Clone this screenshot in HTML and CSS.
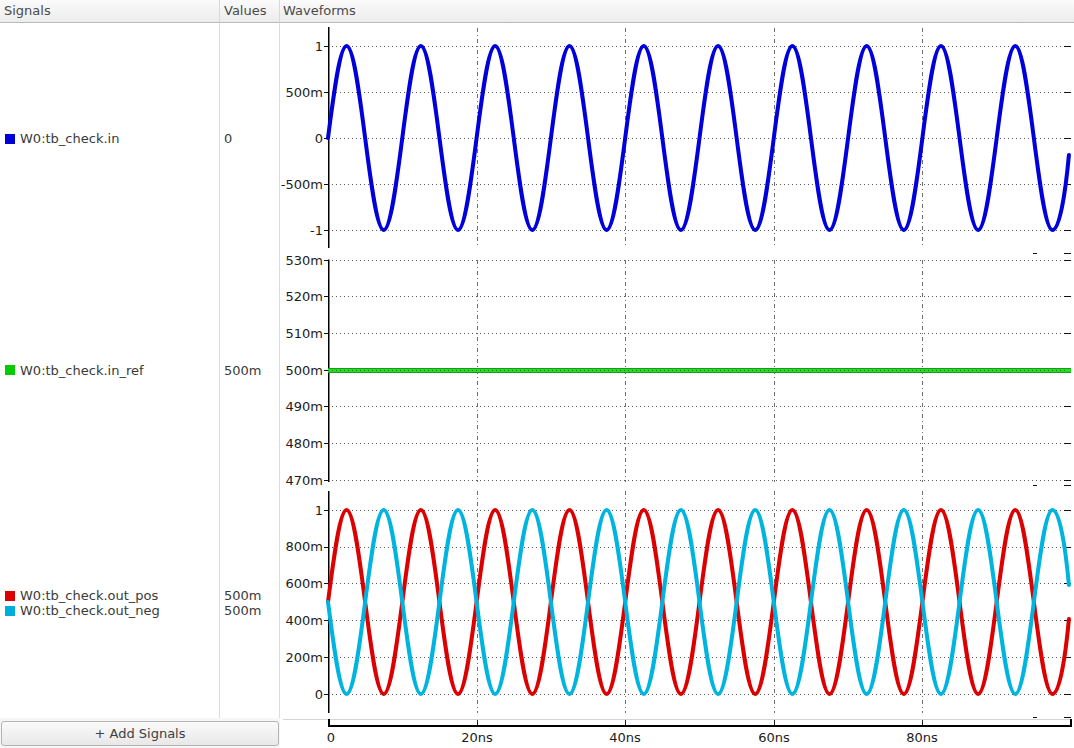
FILE: index.html
```html
<!DOCTYPE html>
<html>
<head>
<meta charset="utf-8">
<title>Waveforms</title>
<link rel="stylesheet" href="styles.css">
</head>
<body>
<div class="app">
  <div class="hcell h-signals">Signals</div>
  <div class="hcell h-values">Values</div>
  <div class="hcell h-waves">Waveforms</div>

  <div class="col signals">
    <div class="row r1"><div class="sig"><span class="sw blue"></span>W0:tb_check.in</div></div>
    <div class="row r2"><div class="sig"><span class="sw green"></span>W0:tb_check.in_ref</div></div>
    <div class="row r3">
      <div class="sig"><span class="sw red"></span>W0:tb_check.out_pos</div>
      <div class="sig"><span class="sw cyan"></span>W0:tb_check.out_neg</div>
    </div>
  </div>

  <div class="col values">
    <div class="row r1"><div class="val">0</div></div>
    <div class="row r2"><div class="val">500m</div></div>
    <div class="row r3">
      <div class="val">500m</div>
      <div class="val">500m</div>
    </div>
  </div>

  <div class="waves">
    <svg class="plot" width="794" height="725" viewBox="280 23 794 725" xmlns="http://www.w3.org/2000/svg">
      <!-- grid: horizontal dotted -->
      <path class="grid" d="M328,46.5H1066M328,92.5H1066M328,138.5H1066M328,184.5H1066M328,230.5H1066
        M328,260.5H1066M328,296.5H1066M328,333.5H1066M328,370.5H1066M328,406.5H1066M328,443.5H1066M328,480.5H1066
        M328,510.5H1066M328,547.5H1066M328,583.5H1066M328,620.5H1066M328,657.5H1066M328,694.5H1066"/>
      <!-- grid: vertical dash-dot -->
      <path class="vgrid" d="M477.5,28V248M625.5,28V248M774.5,28V248M922.5,28V248
        M477.5,260V482M625.5,260V482M774.5,260V482M922.5,260V482
        M477.5,491V713M625.5,491V713M774.5,491V713M922.5,491V713"/>
      <!-- ticks -->
      <path class="tick" d="M324,46.5H328M324,92.5H328M324,138.5H328M324,184.5H328M324,230.5H328
        M324,260.5H328M324,296.5H328M324,333.5H328M324,370.5H328M324,406.5H328M324,443.5H328M324,480.5H328
        M324,510.5H328M324,547.5H328M324,583.5H328M324,620.5H328M324,657.5H328M324,694.5H328
        M1064,46.5H1071M1064,92.5H1071M1064,138.5H1071M1064,184.5H1071M1064,230.5H1071
        M1064,260.5H1071M1064,296.5H1071M1064,333.5H1071M1064,370.5H1071M1064,406.5H1071M1064,443.5H1071M1064,480.5H1071
        M1064,510.5H1071M1064,547.5H1071M1064,583.5H1071M1064,620.5H1071M1064,657.5H1071M1064,694.5H1071
        M1033,253.5H1037M1064,253.5H1071M1033,485.5H1037M1064,485.5H1071M1033,717.5H1037M1064,717.5H1071"/>
      <!-- y axes -->
      <path class="axis" d="M328.75,27V248M328.75,259.5V482M328.75,491V713"/>

      <!-- y labels -->
      <g class="ylab">
        <text x="323" y="46">1</text>
        <text x="323" y="92">500m</text>
        <text x="323" y="138">0</text>
        <text x="323" y="184">-500m</text>
        <text x="323" y="230">-1</text>
        <text x="323" y="260">530m</text>
        <text x="323" y="296.7">520m</text>
        <text x="323" y="333.3">510m</text>
        <text x="323" y="370">500m</text>
        <text x="323" y="406.7">490m</text>
        <text x="323" y="443.3">480m</text>
        <text x="323" y="480">470m</text>
        <text x="323" y="510">1</text>
        <text x="323" y="546.8">800m</text>
        <text x="323" y="583.6">600m</text>
        <text x="323" y="620.4">400m</text>
        <text x="323" y="657.2">200m</text>
        <text x="323" y="694">0</text>
      </g>

      <!-- in_ref -->
      <path class="wave-green-edge" d="M328,370.5H1071"/>
      <path class="wave-green" d="M328,370.5H1071"/>
      <path class="grid-on" d="M328,370.5H1066"/>

      <!-- in -->
      <path class="wave blue" d="M328,138 c6.058,-47.13 11.852,-92 18.575,-92 s12.517,44.87 18.575,92 s11.852,92 18.575,92 s12.517,-44.87 18.575,-92
        s11.852,-92 18.575,-92 s12.517,44.87 18.575,92 s11.852,92 18.575,92 s12.517,-44.87 18.575,-92
        s11.852,-92 18.575,-92 s12.517,44.87 18.575,92 s11.852,92 18.575,92 s12.517,-44.87 18.575,-92
        s11.852,-92 18.575,-92 s12.517,44.87 18.575,92 s11.852,92 18.575,92 s12.517,-44.87 18.575,-92
        s11.852,-92 18.575,-92 s12.517,44.87 18.575,92 s11.852,92 18.575,92 s12.517,-44.87 18.575,-92
        s11.852,-92 18.575,-92 s12.517,44.87 18.575,92 s11.852,92 18.575,92 s12.517,-44.87 18.575,-92
        s11.852,-92 18.575,-92 s12.517,44.87 18.575,92 s11.852,92 18.575,92 s12.517,-44.87 18.575,-92
        s11.852,-92 18.575,-92 s12.517,44.87 18.575,92 s11.852,92 18.575,92 s12.517,-44.87 18.575,-92
        s11.852,-92 18.575,-92 s12.517,44.87 18.575,92 s11.852,92 18.575,92 s12.517,-44.87 18.575,-92
        s11.852,-92 18.575,-92 s12.517,44.87 18.575,92 s11.852,92 18.575,92 s12.517,-32 16.5,-75"/>

      <!-- out_pos -->
      <path class="wave red" d="M328,602 c6.058,-47.13 11.852,-92 18.575,-92 s12.517,44.87 18.575,92 s11.852,92 18.575,92 s12.517,-44.87 18.575,-92
        s11.852,-92 18.575,-92 s12.517,44.87 18.575,92 s11.852,92 18.575,92 s12.517,-44.87 18.575,-92
        s11.852,-92 18.575,-92 s12.517,44.87 18.575,92 s11.852,92 18.575,92 s12.517,-44.87 18.575,-92
        s11.852,-92 18.575,-92 s12.517,44.87 18.575,92 s11.852,92 18.575,92 s12.517,-44.87 18.575,-92
        s11.852,-92 18.575,-92 s12.517,44.87 18.575,92 s11.852,92 18.575,92 s12.517,-44.87 18.575,-92
        s11.852,-92 18.575,-92 s12.517,44.87 18.575,92 s11.852,92 18.575,92 s12.517,-44.87 18.575,-92
        s11.852,-92 18.575,-92 s12.517,44.87 18.575,92 s11.852,92 18.575,92 s12.517,-44.87 18.575,-92
        s11.852,-92 18.575,-92 s12.517,44.87 18.575,92 s11.852,92 18.575,92 s12.517,-44.87 18.575,-92
        s11.852,-92 18.575,-92 s12.517,44.87 18.575,92 s11.852,92 18.575,92 s12.517,-44.87 18.575,-92
        s11.852,-92 18.575,-92 s12.517,44.87 18.575,92 s11.852,92 18.575,92 s12.517,-32 16.5,-75"/>

      <!-- out_neg -->
      <path class="wave cyan" d="M328,602 c6.058,47.13 11.852,92 18.575,92 s12.517,-44.87 18.575,-92 s11.852,-92 18.575,-92 s12.517,44.87 18.575,92
        s11.852,92 18.575,92 s12.517,-44.87 18.575,-92 s11.852,-92 18.575,-92 s12.517,44.87 18.575,92
        s11.852,92 18.575,92 s12.517,-44.87 18.575,-92 s11.852,-92 18.575,-92 s12.517,44.87 18.575,92
        s11.852,92 18.575,92 s12.517,-44.87 18.575,-92 s11.852,-92 18.575,-92 s12.517,44.87 18.575,92
        s11.852,92 18.575,92 s12.517,-44.87 18.575,-92 s11.852,-92 18.575,-92 s12.517,44.87 18.575,92
        s11.852,92 18.575,92 s12.517,-44.87 18.575,-92 s11.852,-92 18.575,-92 s12.517,44.87 18.575,92
        s11.852,92 18.575,92 s12.517,-44.87 18.575,-92 s11.852,-92 18.575,-92 s12.517,44.87 18.575,92
        s11.852,92 18.575,92 s12.517,-44.87 18.575,-92 s11.852,-92 18.575,-92 s12.517,44.87 18.575,92
        s11.852,92 18.575,92 s12.517,-44.87 18.575,-92 s11.852,-92 18.575,-92 s12.517,44.87 18.575,92
        s11.852,92 18.575,92 s12.517,-44.87 18.575,-92 s11.852,-92 18.575,-92 s12.517,32 16.5,75"/>

      <!-- time axis -->
      <path class="xframe" d="M283,719.5H1071"/>
      <path class="xtick" d="M477.5,720V726M625.5,720V726M774.5,720V726M922.5,720V726"/>
      <path class="xaxis" d="M328,726H1072M329,719V727M1071,719V727"/>
      <g class="xlab">
        <text x="331" y="742">0</text>
        <text x="477" y="742">20ns</text>
        <text x="625" y="742">40ns</text>
        <text x="774" y="742">60ns</text>
        <text x="922" y="742">80ns</text>
      </g>
    </svg>
  </div>

  <div class="footer"><button class="add" type="button">+ Add Signals</button></div>
</div>
</body>
</html>
```

FILE: styles.css
```css
html, body {
  margin: 0;
  padding: 0;
  background: #ffffff;
}

body {
  font-family: "DejaVu Sans", "Liberation Sans", sans-serif;
  font-size: 13px;
  color: #3a3a3a;
  width: 1074px;
  height: 748px;
  overflow: hidden;
}

.app {
  display: grid;
  grid-template-columns: 220px 60px 794px;
  grid-template-rows: 23px 695px 30px;
  width: 1074px;
  height: 748px;
}

.hcell {
  background: linear-gradient(#fbfbfb, #ececec);
  border-bottom: 1px solid #b9b9b9;
  border-right: 1px solid #d8d8d8;
  line-height: 22px;
  padding-left: 4px;
  color: #4a4a4a;
  white-space: nowrap;
}

.h-waves {
  border-right: none;
  padding-left: 3px;
}

.col {
  display: flex;
  flex-direction: column;
  border-right: 1px solid #dcdcdc;
}

.row {
  display: flex;
  flex-direction: column;
  justify-content: center;
  box-sizing: border-box;
}

.r1 { height: 227px; padding-top: 4px; }
.r2 { height: 238px; padding-top: 2px; }
.r3 { height: 230px; }

.sig {
  display: flex;
  align-items: center;
  height: 15px;
  padding-left: 5px;
  white-space: nowrap;
}

.sw {
  width: 10px;
  height: 10px;
  margin-right: 5px;
  flex: none;
}

.sw.blue { background: #0000d8; }
.sw.green { background: #00cc00; }
.sw.red { background: #dc0000; }
.sw.cyan { background: #00aedc; }

.val {
  height: 15px;
  line-height: 15px;
  padding-left: 4px;
  white-space: nowrap;
}

.waves {
  grid-column: 3;
  grid-row: 2 / 4;
  background: #ffffff;
}

.plot {
  display: block;
}

.grid {
  fill: none;
  stroke: #5a5a5a;
  stroke-width: 1;
  stroke-dasharray: 1 3;
}

.grid-on {
  fill: none;
  stroke: #2a6a2a;
  stroke-width: 1;
  stroke-dasharray: 1 3;
}

.vgrid {
  fill: none;
  stroke: #6e6e6e;
  stroke-width: 1;
  stroke-dasharray: 4 3 1 3;
}

.tick {
  fill: none;
  stroke: #111111;
  stroke-width: 1;
}

.axis {
  fill: none;
  stroke: #000000;
  stroke-width: 1.5;
}

.ylab text {
  font-family: "DejaVu Sans", sans-serif;
  font-size: 13px;
  fill: #1c1c1c;
  text-anchor: end;
  dominant-baseline: central;
}

.xlab text {
  font-family: "DejaVu Sans", sans-serif;
  font-size: 13px;
  fill: #1c1c1c;
  text-anchor: middle;
}

.wave {
  fill: none;
  stroke-width: 4;
  stroke-linejoin: round;
  stroke-linecap: round;
}

.wave.blue { stroke: #0000dc; }
.wave.red { stroke: #dc0000; }
.wave.cyan { stroke: #00b4e0; }

.wave-green-edge {
  fill: none;
  stroke: #1a9a1a;
  stroke-width: 5;
}

.wave-green {
  fill: none;
  stroke: #22e022;
  stroke-width: 3;
}

.xframe {
  fill: none;
  stroke: #d4d4d4;
  stroke-width: 1;
}

.xtick {
  fill: none;
  stroke: #222222;
  stroke-width: 1;
}

.xaxis {
  fill: none;
  stroke: #000000;
  stroke-width: 2;
}

.footer {
  grid-column: 1 / 3;
  grid-row: 3;
  background: #f6f6f6;
  padding: 3px 1px 2px 1px;
  display: flex;
}

.add {
  flex: 1;
  height: 25px;
  margin: 0;
  border: 1px solid #b4b4b4;
  border-radius: 3px;
  background: linear-gradient(#fafafa, #e8e8e8);
  font-family: "DejaVu Sans", "Liberation Sans", sans-serif;
  font-size: 13px;
  color: #404040;
  padding: 0;
}
```
